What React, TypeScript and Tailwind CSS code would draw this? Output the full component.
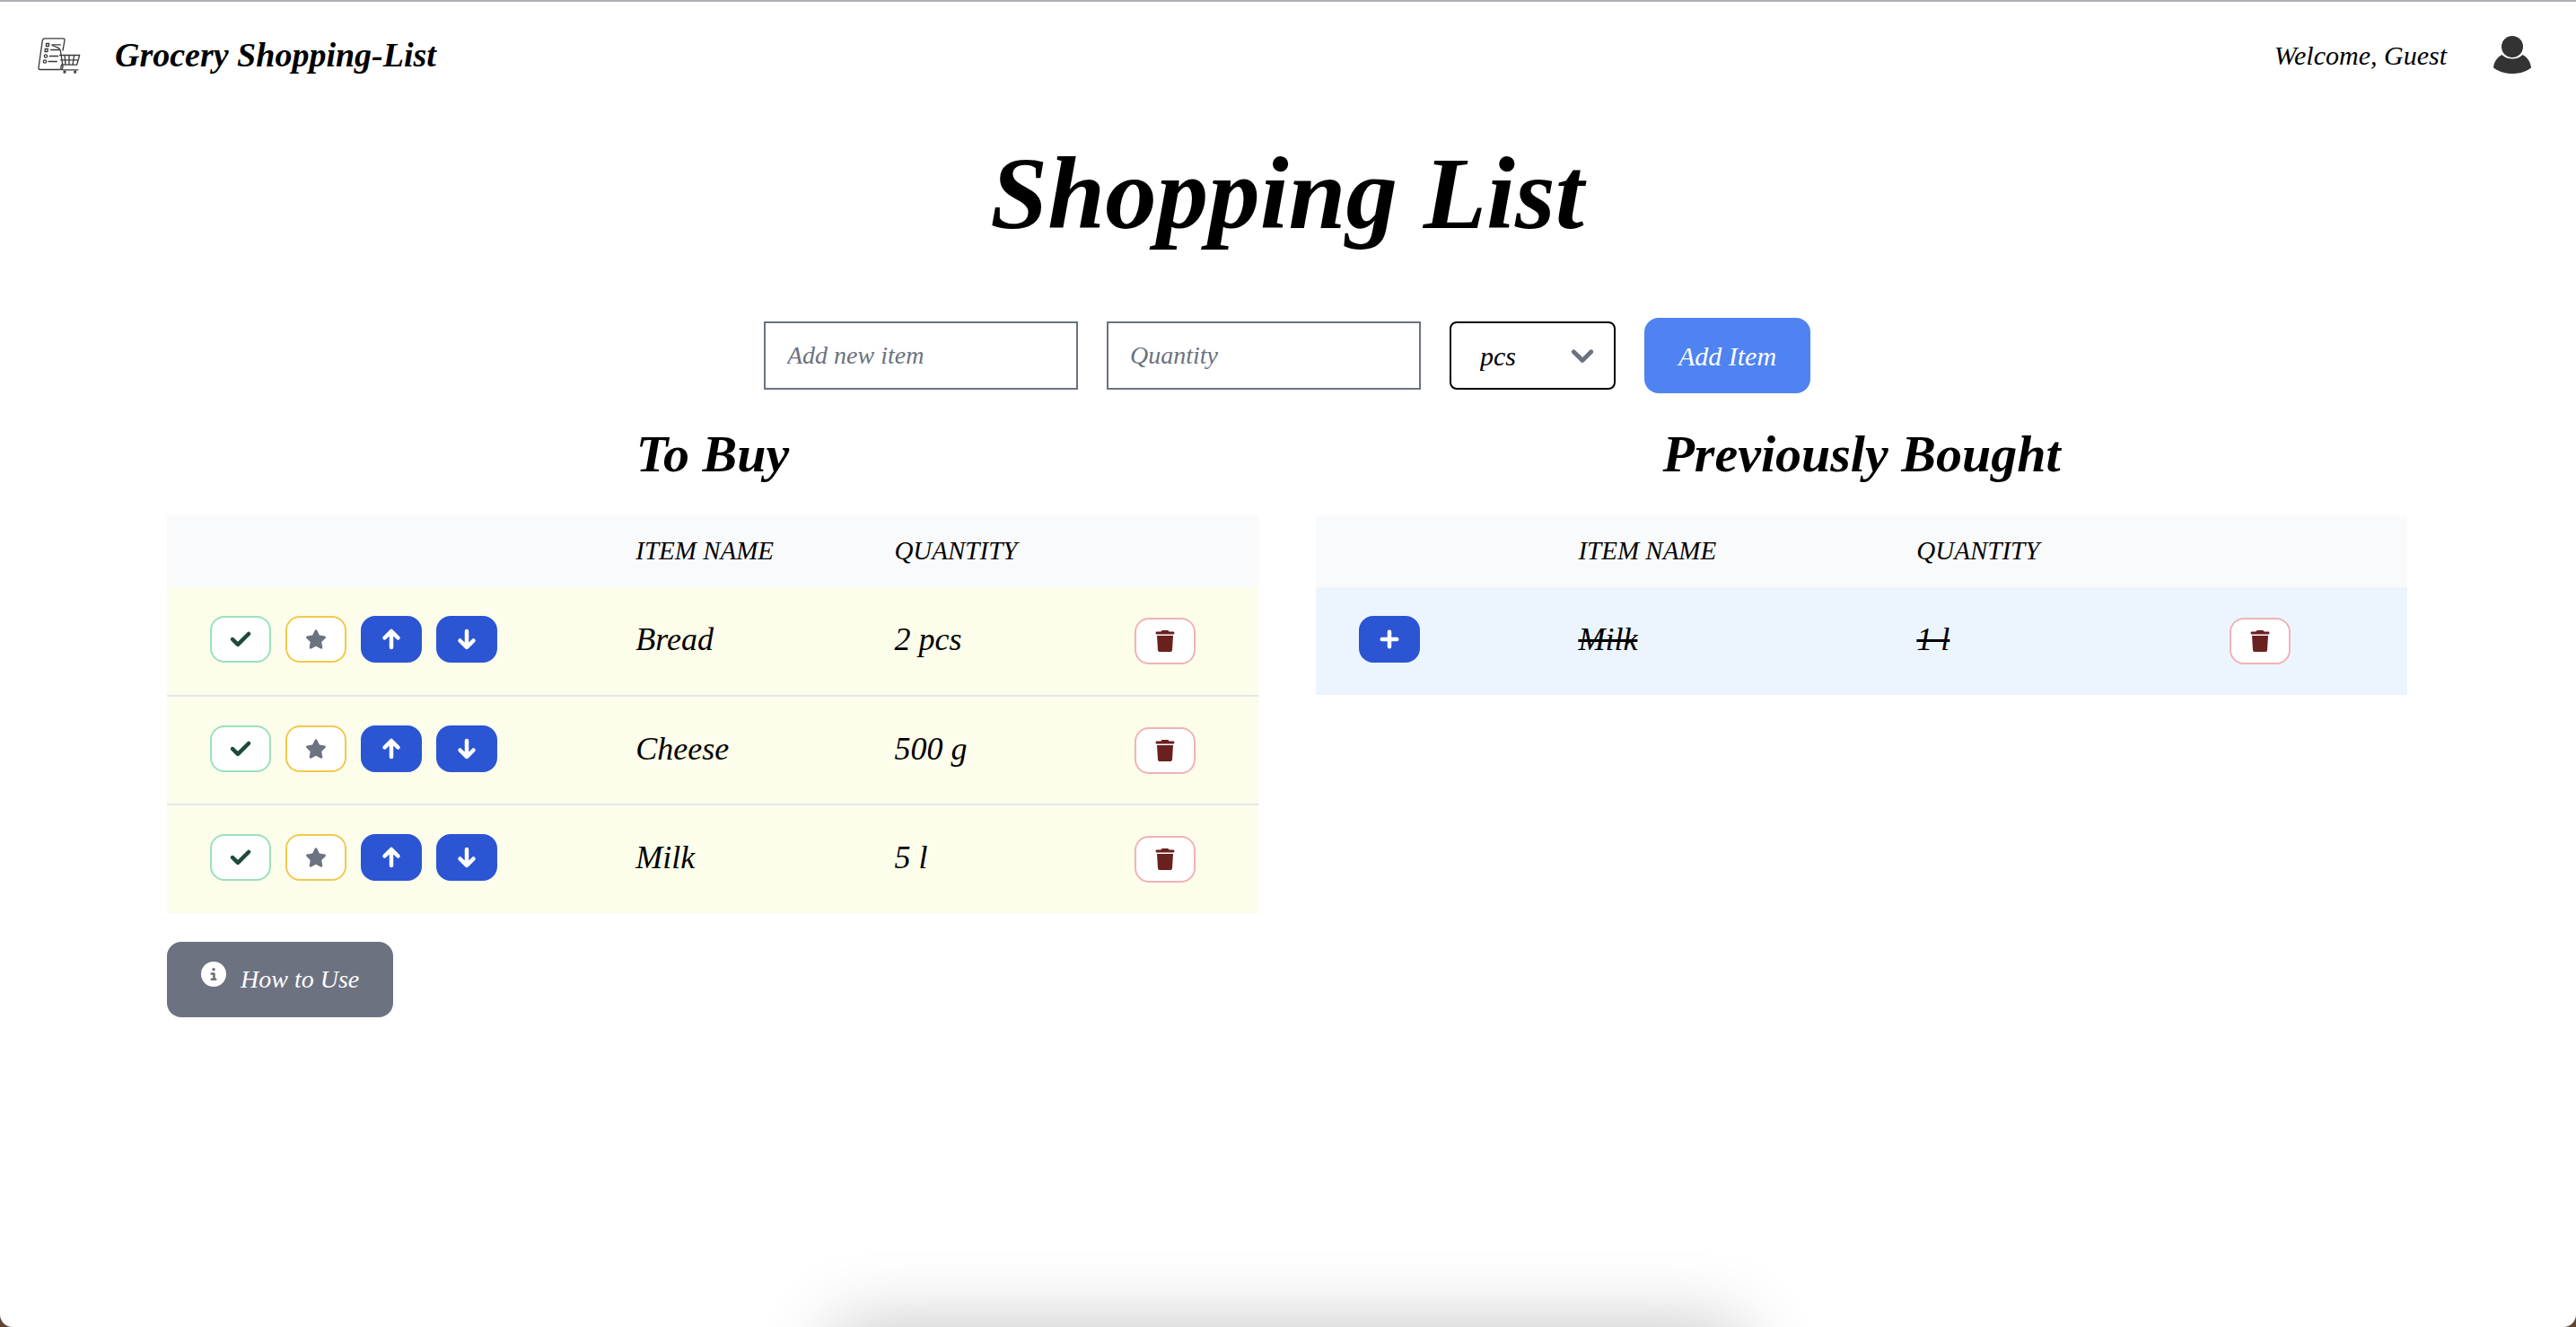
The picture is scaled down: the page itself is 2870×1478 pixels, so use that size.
import type { ReactNode } from "react";
import {
  FaArrowDown,
  FaArrowUp,
  FaCheck,
  FaChevronDown,
  FaCircleInfo,
  FaPlus,
  FaStar,
  FaTrash,
} from "react-icons/fa6";

type Item = { name: string; quantity: string };

const toBuy: Item[] = [
  { name: "Bread", quantity: "2 pcs" },
  { name: "Cheese", quantity: "500 g" },
  { name: "Milk", quantity: "5 l" },
];

const bought: Item[] = [{ name: "Milk", quantity: "1 l" }];

function Logo() {
  return (
    <svg
      viewBox="0 0 144 128"
      className="h-[43px] w-12"
      fill="none"
      stroke="#3a3a3a"
      strokeWidth="4"
      strokeLinejoin="round"
      strokeLinecap="round"
      aria-hidden="true"
    >
      <path d="M74 112H8q-5 0-5-6L16 14q2-6 8-6h60q7 0 6 6l-6 34" />
      <path d="M29 25h9l-1 9h-9zM25 43h9l-1 9h-9z" />
      <circle cx="27" cy="67" r="5" />
      <circle cx="24" cy="85" r="5" />
      <path d="M48 29h28M44 46h28M40 67h28M36 85h28" />
      <path d="M48 31l20 8q6 3 8 10l8 50q1 10-6 13" />
      <path d="M74 64h66l-9 32H80M77 80h58M90 64l3 32M105 64v32M122 64l-5 32" />
      <path d="M80 96q-7 17 3 17h52" />
      <circle cx="90" cy="120" r="3" />
      <circle cx="125" cy="120" r="3" />
    </svg>
  );
}

function Avatar() {
  return (
    <svg viewBox="0 0 42 42" className="size-[42px]" fill="#333333" aria-hidden="true">
      <circle cx="21" cy="12" r="12" />
      <path d="M9.500 21c3 3 7 4.500 11.500 4.500S29.500 24 32.500 21C38 24 41.500 29 42 35.500 36 40 29 42 21 42S6 40 0 35.500C0.500 29 4 24 9.500 21z" />
    </svg>
  );
}

function IconButton({
  label,
  look,
  children,
}: {
  label: string;
  look: string;
  children: ReactNode;
}) {
  return (
    <button
      type="button"
      aria-label={label}
      className={`flex h-[52px] w-[68px] items-center justify-center rounded-2xl border-2 text-2xl ${look}`}
    >
      {children}
    </button>
  );
}

const blue = "border-[#2b55d3] bg-[#2b55d3] text-white";
const bold = "overflow-visible stroke-current stroke-[32px]";

function DeleteCell() {
  return (
    <td className="px-12">
      <IconButton label="Delete" look="border-[#f1b3b5] bg-white text-[#6b2020]">
        <FaTrash />
      </IconButton>
    </td>
  );
}

function HeadRow() {
  return (
    <thead>
      <tr className="h-20 bg-[#f9fafc] text-left text-[29px] uppercase">
        <th aria-label="Actions" />
        <th className="px-12 font-normal">Item Name</th>
        <th className="px-12 font-normal">Quantity</th>
        <th aria-label="Delete" />
      </tr>
    </thead>
  );
}

export default function App() {
  return (
    <div className="bg-[#5f4334]">
      <div className="relative min-h-screen overflow-hidden rounded-b-[14px] border-t-2 border-[#b0aeb4] bg-white pr-0.5 font-['Liberation_Serif',serif] text-black italic">
        <header className="flex h-[122px] items-center justify-between pr-12 pb-1 pl-[42px]">
          <div className="flex items-center gap-[38px]">
            <Logo />
            <span className="text-[38px] font-bold">Grocery Shopping-List</span>
          </div>
          <div className="flex items-center gap-[52px]">
            <span className="text-[30px]">Welcome, Guest</span>
            <Avatar />
          </div>
        </header>

        <main className="mx-auto max-w-[2560px] px-8">
          <h1 className="pt-3 text-center text-[115px] leading-[160px] font-bold">
            Shopping List
          </h1>

          <form className="mt-[58px] flex items-center justify-center gap-8">
            <input
              aria-label="Item name"
              placeholder="Add new item"
              className="h-[76px] w-[350px] border-2 border-[#6b7280] px-6 text-[28px] italic placeholder:text-[#6b7280]"
            />
            <input
              aria-label="Quantity"
              placeholder="Quantity"
              className="h-[76px] w-[350px] border-2 border-[#6b7280] px-6 text-[28px] italic placeholder:text-[#6b7280]"
            />
            <div className="relative">
              <select
                aria-label="Unit"
                className="h-[76px] w-[185px] appearance-none rounded-lg border-2 border-black px-8 text-[30px] italic"
              >
                <option>pcs</option>
                <option>g</option>
                <option>l</option>
              </select>
              <FaChevronDown className="pointer-events-none absolute top-6 right-6 size-[26px] overflow-visible stroke-current stroke-[32px] text-[#6b7280]" />
            </div>
            <button
              type="button"
              className="h-[84px] w-[185px] rounded-2xl bg-[#4f83f1] text-[30px] text-white"
            >
              Add Item
            </button>
          </form>

          <div className="mt-8 grid grid-cols-2 gap-16">
            <section>
              <h2 className="text-center text-[58px] leading-[72px] font-bold">To Buy</h2>
              <table className="mt-8 w-full table-fixed">
                <colgroup>
                  <col className="w-[39%]" />
                  <col className="w-[23.7%]" />
                  <col className="w-[22%]" />
                  <col />
                </colgroup>
                <HeadRow />
                <tbody className="divide-y-2 divide-[#e5e7eb] bg-[#fcfdea] text-4xl">
                  {toBuy.map((item) => (
                    <tr key={item.name} className="h-[121px]">
                      <td className="px-12 pb-1">
                        <div className="flex gap-4">
                          <IconButton label="Bought" look="border-[#99e1bd] bg-white text-[#1f4a3a]">
                            <FaCheck className={bold} />
                          </IconButton>
                          <IconButton label="Favorite" look="border-[#f2c94c] bg-white text-[#6d7280]">
                            <FaStar />
                          </IconButton>
                          <IconButton label="Move up" look={blue}>
                            <FaArrowUp className={bold} />
                          </IconButton>
                          <IconButton label="Move down" look={blue}>
                            <FaArrowDown className={bold} />
                          </IconButton>
                        </div>
                      </td>
                      <td className="px-12 pb-1">{item.name}</td>
                      <td className="px-12 pb-1">{item.quantity}</td>
                      <DeleteCell />
                    </tr>
                  ))}
                </tbody>
              </table>
              <button
                type="button"
                className="mt-8 flex h-[84px] items-center gap-4 rounded-2xl bg-[#6d7280] px-[38px] text-[28px] text-white"
              >
                <FaCircleInfo className="mb-3 size-7" />
                How to Use
              </button>
            </section>

            <section>
              <h2 className="text-center text-[58px] leading-[72px] font-bold">
                Previously Bought
              </h2>
              <table className="mt-8 w-full table-fixed">
                <colgroup>
                  <col className="w-[20.1%]" />
                  <col className="w-[31%]" />
                  <col className="w-[28.7%]" />
                  <col />
                </colgroup>
                <HeadRow />
                <tbody className="bg-[#ecf5fe] text-4xl">
                  {bought.map((item) => (
                    <tr key={item.name} className="h-[120px]">
                      <td className="px-12 pb-1">
                        <IconButton label="Add again" look={blue}>
                          <FaPlus className={bold} />
                        </IconButton>
                      </td>
                      <td className="px-12 pb-1 line-through decoration-3">{item.name}</td>
                      <td className="px-12 pb-1 line-through decoration-3">{item.quantity}</td>
                      <DeleteCell />
                    </tr>
                  ))}
                </tbody>
              </table>
            </section>
          </div>
        </main>

        <div className="pointer-events-none absolute -bottom-24 left-1/2 h-24 w-[1010px] -translate-x-1/2 shadow-[0_0_84px_rgba(0,0,0,0.24)]" />
      </div>
    </div>
  );
}
